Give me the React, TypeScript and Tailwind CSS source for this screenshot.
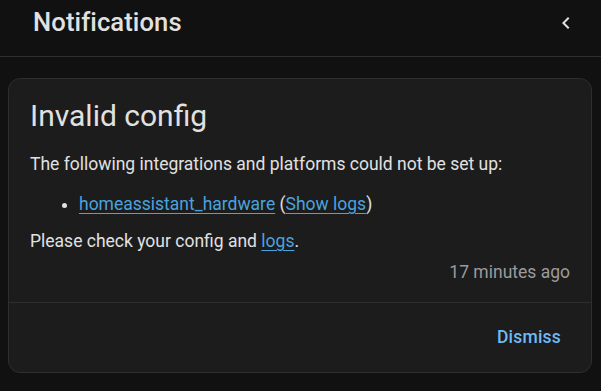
import React from "react";

export default function App() {
  return (
    <div
      className="w-[601px] h-[391px] bg-[#111111] text-[#e1e1e1] overflow-hidden"
      style={{ fontFamily: "Roboto, 'Noto Sans', sans-serif" }}
    >
      <div className="h-[57px] border-b border-[#2e2e2e] flex items-center justify-between pl-[33px] pr-[23px]">
        <div className="text-[25.6px] font-medium tracking-[0.1px] text-[#e1e1e1] mt-[-11px]">Notifications</div>
        <svg width="24" height="24" viewBox="0 0 24 24" className="mt-[-11px]">
          <path fill="#e1e1e1" d="M15.41,16.58L10.83,12L15.41,7.41L14,6L8,12L14,18L15.41,16.58Z" />
        </svg>
      </div>
      <div className="pt-[21px] px-[8px]">
        <div className="w-[584px] rounded-[12px] border border-[#2e2e2e] bg-[#1c1c1c]">
          <div className="px-[21px] pt-[15px] pb-[17px]">
            <div className="text-[30px] leading-[44px] text-[#e1e1e1]">Invalid config</div>
            <div className="text-[17.5px] leading-[26px] mt-[13px]">
              The following integrations and platforms could not be set up:
            </div>
            <ul className="list-disc pl-[49px] mt-[14px] text-[17.5px] leading-[26px] marker:text-[#e1e1e1]">
              <li>
                <a className="text-[#4aa3df] underline underline-offset-[3px]">homeassistant_hardware</a> (
                <a className="text-[#4aa3df] underline underline-offset-[3px]">Show logs</a>)
              </li>
            </ul>
            <div className="text-[17.5px] leading-[26px] mt-[11px]">
              Please check your config and{" "}
              <a className="text-[#4aa3df] underline underline-offset-[3px]">logs</a>.
            </div>
            <div className="text-right text-[17.5px] leading-[26px] text-[#9b9b9b] mt-[5px]">17 minutes ago</div>
          </div>
          <div className="border-t border-[#2e2e2e] h-[70px] flex items-center justify-end pr-[30px]">
            <span className="text-[17.5px] font-medium tracking-[0.2px] text-[#6ebbf7]">Dismiss</span>
          </div>
        </div>
      </div>
    </div>
  );
}
